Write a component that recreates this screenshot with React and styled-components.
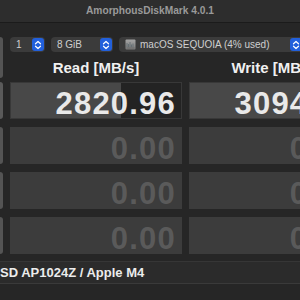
import styled, { createGlobalStyle } from 'styled-components';

const GlobalStyle = createGlobalStyle`
  html, body {
    margin: 0;
    background: #262626;
    overflow: hidden;
  }
  body {
    width: 300px;
    height: 300px;
    font-family: "Liberation Sans", Arial, sans-serif;
  }
`;

const rows = [
  { read: '2820.96', write: '3094.12', readBar: 64, writeBar: 72, active: true },
  { read: '0.00', write: '0.00' },
  { read: '0.00', write: '0.00' },
  { read: '0.00', write: '0.00' },
];

function Stepper() {
  return (
    <StyledStepper>
      <svg width="8" height="10" viewBox="0 0 8 10">
        <path d="M1.5 3.8 L4 1.5 L6.5 3.8 M1.5 6.2 L4 8.5 L6.5 6.2" fill="none" stroke="#fff" strokeWidth="1.2" strokeLinecap="round" strokeLinejoin="round" />
      </svg>
    </StyledStepper>
  );
}

function DiskIcon() {
  return (
    <svg width="11" height="11" viewBox="0 0 11 11">
      <defs>
        <linearGradient id="dk" x1="0" y1="0" x2="0" y2="1">
          <stop offset="0" stopColor="#a4a4a4" />
          <stop offset="1" stopColor="#7b7b7b" />
        </linearGradient>
      </defs>
      <rect x="0.5" y="0.5" width="10" height="10" rx="1" fill="url(#dk)" />
      <path d="M2 8 V4 M3.5 8 V5 M5 8 V3 M6.5 8 V5.5 M8 8 V4.5" stroke="#5e6a70" strokeWidth="0.8" />
      <rect x="1.5" y="8.5" width="8" height="1" fill="#666" />
    </svg>
  );
}

export default function App() {
  return (
    <>
      <GlobalStyle />
      <StyledWindow>
        <StyledTitleBar>AmorphousDiskMark 4.0.1</StyledTitleBar>
        <StyledTop>
          <StyledLabel $span />
          <StyledControls>
            <StyledSelect $width={35}>
              <span>1</span>
              <Stepper />
            </StyledSelect>
            <StyledSelect $width={62}>
              <span>8 GiB</span>
              <Stepper />
            </StyledSelect>
            <StyledSelect $width={184} $gap={4}>
              <DiskIcon />
              <span>macOS SEQUOIA (4% used)</span>
              <Stepper />
            </StyledSelect>
          </StyledControls>
          <StyledHeader>Read [MB/s]</StyledHeader>
          <StyledHeader>Write [MB/s]</StyledHeader>
        </StyledTop>
        <StyledRows>
          {rows.map((r, i) => (
            <StyledRow key={i}>
              <StyledLabel $light={r.active} />
              <StyledCell $active={r.active}>
                {r.readBar && <StyledBar style={{ width: `${r.readBar}%` }} />}
                <StyledValue $zero={r.read === '0.00'}>{r.read}</StyledValue>
              </StyledCell>
              <StyledCell $active={r.active}>
                {r.writeBar && <StyledBar style={{ width: `${r.writeBar}%` }} />}
                <StyledValue $zero={r.write === '0.00'}>{r.write}</StyledValue>
              </StyledCell>
            </StyledRow>
          ))}
        </StyledRows>
        <StyledFooter>Apple SSD AP1024Z / Apple M4</StyledFooter>
      </StyledWindow>
    </>
  );
}

const StyledWindow = styled.div`
  display: flex;
  flex-direction: column;
  width: 420px;
  height: 300px;
  margin-left: -57px;
  background: #262626;
`;

const StyledTitleBar = styled.div`
  height: 22px;
  margin-left: 57px;
  width: 300px;
  background: #2d2d2d;
  border-bottom: 1px solid #1b1b1b;
  color: #9a9a9a;
  font-size: 10.2px;
  font-weight: bold;
  line-height: 22px;
  text-align: center;
`;

const StyledTop = styled.div`
  display: grid;
  grid-template-columns: 60px 172px 172px;
  grid-template-rows: 15px 26px;
  column-gap: 7px;
  margin-top: 14px;
`;

const StyledLabel = styled.div`
  grid-row: ${p => (p.$span ? 'span 2' : 'auto')};
  background: ${p => (p.$light ? '#5a5a5a' : '#545454')};
  border-radius: 3px;
`;

const StyledControls = styled.div`
  grid-column: span 2;
  display: flex;
  gap: 6px;
`;

const StyledSelect = styled.div`
  display: flex;
  align-items: center;
  gap: ${p => p.$gap || 0}px;
  width: ${p => p.$width}px;
  flex: none;
  height: 15px;
  padding: 0 1px 0 6px;
  box-sizing: border-box;
  background: #3b3b3b;
  border-radius: 4px;
  color: #cfcfcf;
  font-size: 10px;

  span {
    flex: 1;
    white-space: nowrap;
  }
`;

const StyledStepper = styled.div`
  display: flex;
  align-items: center;
  justify-content: center;
  width: 12px;
  height: 13px;
  background: #2260dc;
  border-radius: 3px;
  flex: none;
`;

const StyledHeader = styled.div`
  padding-top: 6px;
  line-height: 20px;
  color: #f0f0f0;
  font-size: 15px;
  font-weight: bold;
  text-align: center;
  white-space: nowrap;
`;

const StyledRows = styled.div`
  display: flex;
  flex-direction: column;
  gap: 8px;
  margin-top: 4px;
`;

const StyledRow = styled.div`
  display: grid;
  grid-template-columns: 60px 172px 172px;
  column-gap: 7px;
  height: 37px;
`;

const StyledCell = styled.div`
  position: relative;
  display: flex;
  justify-content: flex-end;
  background: ${p => (p.$active ? '#232323' : '#3c3c3c')};
  box-shadow: ${p => (p.$active ? 'inset 0 0 0 1px #383838' : 'none')};
  overflow: hidden;
`;

const StyledBar = styled.div`
  position: absolute;
  left: 1px;
  top: 1px;
  bottom: 1px;
  background: #484848;
`;

const StyledValue = styled.div`
  position: relative;
  padding: 6px 6px 0 0;
  line-height: 31px;
  font-size: 31px;
  font-weight: bold;
  letter-spacing: 1.2px;
  color: ${p => (p.$zero ? '#5a5a5a' : '#e9e9e9')};
`;

const StyledFooter = styled.div`
  margin-top: 7px;
  height: 21px;
  padding-left: 8.6px;
  background: #2b2b2b;
  border-top: 1px solid #363636;
  border-bottom: 1px solid #3a3a3a;
  color: #ececec;
  font-size: 13px;
  font-weight: bold;
  line-height: 21px;
  white-space: nowrap;
`;
